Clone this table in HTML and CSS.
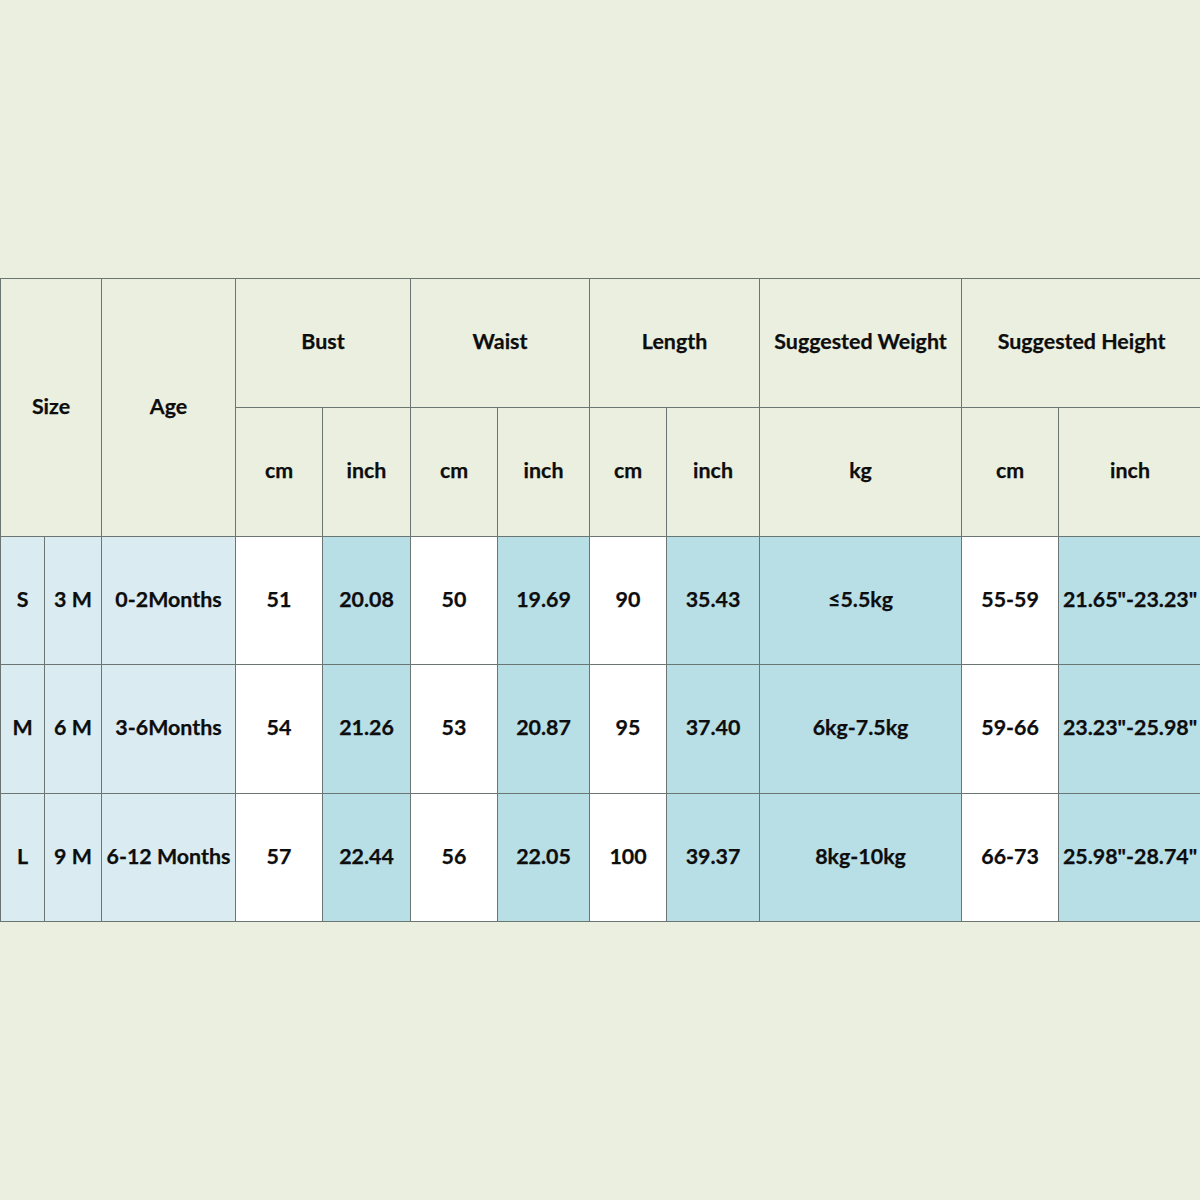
FILE: index.html
```html
<!DOCTYPE html>
<html>
<head>
<meta charset="utf-8">
<link rel="stylesheet" href="styles.css">
</head>
<body>
<div class="page">
<table class="chart">
<colgroup>
<col style="width:44px"><col style="width:57px"><col style="width:134px">
<col style="width:87px"><col style="width:88px">
<col style="width:87px"><col style="width:92px">
<col style="width:77px"><col style="width:93px">
<col style="width:202px">
<col style="width:97px"><col style="width:143px">
</colgroup>
<tr class="r1">
<th colspan="2" rowspan="2">Size</th>
<th rowspan="2">Age</th>
<th colspan="2">Bust</th>
<th colspan="2">Waist</th>
<th colspan="2">Length</th>
<th>Suggested Weight</th>
<th colspan="2">Suggested Height</th>
</tr>
<tr class="r2">
<th>cm</th><th>inch</th>
<th>cm</th><th>inch</th>
<th>cm</th><th>inch</th>
<th>kg</th>
<th>cm</th><th>inch</th>
</tr>
<tr class="r3">
<td class="lb">S</td><td class="lb">3 M</td><td class="lb">0-2Months</td>
<td class="w">51</td><td class="b">20.08</td>
<td class="w">50</td><td class="b">19.69</td>
<td class="w">90</td><td class="b">35.43</td>
<td class="b">≤5.5kg</td>
<td class="w">55-59</td><td class="b">21.65"-23.23"</td>
</tr>
<tr class="r4">
<td class="lb">M</td><td class="lb">6 M</td><td class="lb">3-6Months</td>
<td class="w">54</td><td class="b">21.26</td>
<td class="w">53</td><td class="b">20.87</td>
<td class="w">95</td><td class="b">37.40</td>
<td class="b">6kg-7.5kg</td>
<td class="w">59-66</td><td class="b">23.23"-25.98"</td>
</tr>
<tr class="r5">
<td class="lb">L</td><td class="lb">9 M</td><td class="lb">6-12 Months</td>
<td class="w">57</td><td class="b">22.44</td>
<td class="w">56</td><td class="b">22.05</td>
<td class="w">100</td><td class="b">39.37</td>
<td class="b">8kg-10kg</td>
<td class="w">66-73</td><td class="b">25.98"-28.74"</td>
</tr>
</table>
</div>
</body>
</html>
```
FILE: styles.css
```css
html, body {
  margin: 0;
  padding: 0;
  background: #ebefdf;
  width: 1200px;
  height: 1200px;
  overflow: hidden;
}
.page {
  padding-top: 278px;
}
.chart {
  border-collapse: collapse;
  table-layout: fixed;
  width: 1201px;
  font-family: Lato, "Open Sans", sans-serif;
  font-weight: 700;
  font-size: 21.4px;
  color: #0d0d0d;
}
.chart th, .chart td {
  border: 1px solid #6b7672;
  padding: 0 0 4px 0;
  text-align: center;
  vertical-align: middle;
  white-space: nowrap;
  overflow: hidden;
  font-weight: 700;
  -webkit-text-stroke: 0.25px #0d0d0d;
}
.r1, .r2, .r4 { height: 129px; }
.r3 { height: 128px; }
.r5 { height: 128px; }
.chart th {
  background: #ebefdf;
}
.lb { background: #daecf1; }
.w { background: #ffffff; }
.b { background: #b8dee6; }
```
